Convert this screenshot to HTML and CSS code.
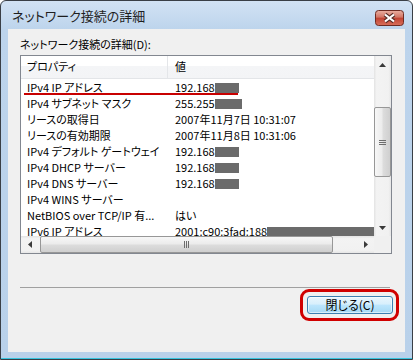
FILE: index.html
```html
<!DOCTYPE html>
<html lang="ja">
<head>
    <meta charset="UTF-8">
    <title>ネットワーク接続の詳細</title>
    <link rel="stylesheet" href="styles.css">
</head>
<body>
<div class="window">
    <div class="titlebar">
        <span class="title">ネットワーク接続の詳細</span>
        <span class="close-btn">
            <svg width="29" height="16" viewBox="0 0 29 16">
                <defs>
                    <linearGradient id="closeGrad" x1="0" y1="0" x2="0" y2="1">
                        <stop offset="0" stop-color="#eab0a2"/>
                        <stop offset="0.45" stop-color="#d27565"/>
                        <stop offset="0.5" stop-color="#c04232"/>
                        <stop offset="1" stop-color="#d9705b"/>
                    </linearGradient>
                </defs>
                <rect x="0.5" y="0.5" width="28" height="15" rx="3" fill="url(#closeGrad)" stroke="#6e2b22"/>
                <path d="M10 4.5 L19 11.5 M19 4.5 L10 11.5" stroke="#5a302a" stroke-width="4.2"/>
                <path d="M10 4.5 L19 11.5 M19 4.5 L10 11.5" stroke="#fff" stroke-width="2.2"/>
            </svg>
        </span>
    </div>

    <div class="client">
        <div class="caption">ネットワーク接続の詳細(D):</div>

        <div class="listbox">
            <div class="view">
                <div class="header">
                    <div class="col1">プロパティ</div>
                    <div class="col2">値</div>
                </div>
                <div class="row"><div class="col1">IPv4 IP アドレス</div><div class="col2">192.168<span class="mask mask-s"></span></div></div>
                <div class="row"><div class="col1">IPv4 サブネット マスク</div><div class="col2">255.255<span class="mask mask-m"></span></div></div>
                <div class="row"><div class="col1">リースの取得日</div><div class="col2">2007年11月7日 10:31:07</div></div>
                <div class="row"><div class="col1">リースの有効期限</div><div class="col2">2007年11月8日 10:31:06</div></div>
                <div class="row"><div class="col1">IPv4 デフォルト ゲートウェイ</div><div class="col2">192.168<span class="mask mask-s"></span></div></div>
                <div class="row"><div class="col1">IPv4 DHCP サーバー</div><div class="col2">192.168<span class="mask mask-s"></span></div></div>
                <div class="row"><div class="col1">IPv4 DNS サーバー</div><div class="col2">192.168<span class="mask mask-s"></span></div></div>
                <div class="row"><div class="col1">IPv4 WINS サーバー</div><div class="col2"></div></div>
                <div class="row"><div class="col1">NetBIOS over TCP/IP 有...</div><div class="col2">はい</div></div>
                <div class="row"><div class="col1">IPv6 IP アドレス</div><div class="col2">2001:c90:3fad:188<span class="mask mask-l"></span></div></div>
            </div>

            <div class="vscroll">
                <div class="sb-btn">
                    <svg width="7" height="4" viewBox="0 0 7 4"><polygon points="3.5,0 7,4 0,4" fill="#3a3a3a"/></svg>
                </div>
                <div class="vtrack">
                    <div class="vthumb">
                        <svg width="7" height="5" viewBox="0 0 7 5"><path d="M0 0.5 H7 M0 2.5 H7 M0 4.5 H7" stroke="#6d6d6d"/></svg>
                    </div>
                </div>
                <div class="sb-btn">
                    <svg width="7" height="4" viewBox="0 0 7 4"><polygon points="0,0 7,0 3.5,4" fill="#3a3a3a"/></svg>
                </div>
            </div>

            <div class="hscroll">
                <div class="sb-btn">
                    <svg width="4" height="7" viewBox="0 0 4 7"><polygon points="4,0 4,7 0,3.5" fill="#3a3a3a"/></svg>
                </div>
                <div class="htrack">
                    <div class="hthumb">
                        <svg width="5" height="7" viewBox="0 0 5 7"><path d="M0.5 0 V7 M2.5 0 V7 M4.5 0 V7" stroke="#6d6d6d"/></svg>
                    </div>
                </div>
                <div class="sb-btn">
                    <svg width="4" height="7" viewBox="0 0 4 7"><polygon points="0,0 4,3.5 0,7" fill="#3a3a3a"/></svg>
                </div>
            </div>

            <div class="corner"></div>

            <!-- red annotation under the first row -->
            <div class="mark-line"></div>
        </div>

        <div class="separator"></div>

        <div class="footer">
            <div class="mark-box">
                <button class="close-dialog">閉じる(C)</button>
            </div>
        </div>
    </div>
</div>
</body>
</html>
```

FILE: styles.css
```css
* {
    box-sizing: border-box;
}

body {
    margin: 0;
    font-family: "Noto Sans CJK JP", sans-serif;
    font-size: 11px;
    font-feature-settings: "palt";
    color: #000;
    background-color: #fff;
}

.window {
    width: 413px;
    height: 360px;
    display: flex;
    flex-direction: column;
    padding: 0 7px 7px;
    border: 1px solid #3a3f46;
    border-radius: 6px 6px 0 0;
    background: linear-gradient(#d2e2f4 0, #bdd4ec 28px, #b9d1ea 100%);
    box-shadow: inset 0 -1px 0 #36c4de;
    overflow: hidden;
}

.titlebar {
    height: 28px;
    display: flex;
    align-items: flex-start;
}

.title {
    padding: 7px 0 0 4px;
    font-size: 13px;
    line-height: 16px;
    color: #1e1e1e;
}

.close-btn {
    margin: 9px 1px 0 auto;
    height: 16px;
}

.close-btn svg {
    display: block;
}

.client {
    flex: 1;
    display: flex;
    flex-direction: column;
    padding: 7px 6px 0 12px;
    background-color: #f0f0f0;
}

.caption {
    line-height: 16px;
    margin-bottom: 3px;
}

.listbox {
    position: relative;
    height: 199px;
    margin-right: 7px;
    border: 1px solid #828790;
    background-color: #fff;
    display: grid;
    grid-template-columns: 1fr 17px;
    grid-template-rows: 1fr 17px;
}

.view {
    overflow: hidden;
}

.header {
    display: flex;
    height: 23px;
    line-height: 21px;
    background: linear-gradient(#fff 0, #fff 45%, #f4f5f7 46%, #f3f4f6 100%);
    border-bottom: 1px solid #e3e5e8;
}

.header .col1 {
    border-right: 1px solid #e4e6e9;
}

.row {
    display: flex;
    height: 16px;
    line-height: 16px;
}

.col1 {
    flex: none;
    width: 147px;
    padding-left: 6px;
    overflow: hidden;
    white-space: nowrap;
}

.col2 {
    padding-left: 7px;
    white-space: nowrap;
}

.mask {
    display: inline-block;
    height: 10px;
    vertical-align: -1px;
    background-color: #6b6b6b;
}

.mask-s {
    width: 24px;
}

.mask-m {
    width: 27px;
}

.mask-l {
    width: 110px;
}

.vscroll {
    display: flex;
    flex-direction: column;
    background: linear-gradient(to right, #e3e3e3 0, #f3f3f3 15%, #f1f1f1 85%, #e6e6e6 100%);
}

.hscroll {
    display: flex;
    background: linear-gradient(#e3e3e3 0, #f3f3f3 15%, #f1f1f1 85%, #e6e6e6 100%);
}

.sb-btn {
    flex: none;
    width: 17px;
    height: 17px;
    display: flex;
    align-items: center;
    justify-content: center;
}

.sb-btn svg {
    display: block;
}

.vtrack {
    flex: 1;
}

.vthumb {
    margin: 34px 0 0 0;
    height: 70px;
    border: 1px solid #979797;
    border-radius: 2px;
    background: linear-gradient(to right, #f7f7f7 0, #ececec 45%, #dcdcdc 55%, #cfcfcf 100%);
    display: flex;
    align-items: center;
    justify-content: center;
}

.htrack {
    flex: 1;
}

.hthumb {
    margin: 0 0 0 2px;
    width: 293px;
    height: 17px;
    border: 1px solid #979797;
    border-radius: 2px;
    background: linear-gradient(#f7f7f7 0, #ececec 45%, #dcdcdc 55%, #cfcfcf 100%);
    display: flex;
    align-items: center;
    justify-content: center;
}

.corner {
    background-color: #f0f0f0;
}

.mark-line {
    position: absolute;
    left: 3px;
    top: 37px;
    width: 214px;
    height: 2px;
    background-color: #c80000;
}

.separator {
    height: 1px;
    margin: 33px 9px 0 0;
    background-color: #a0a0a0;
}

.footer {
    display: flex;
    justify-content: flex-end;
    margin-top: 1px;
}

.mark-box {
    padding: 4px 3px 4px 4px;
    border: 3px solid #d00000;
    border-radius: 9px;
}

.close-dialog {
    display: block;
    width: 86px;
    height: 18px;
    padding: 0;
    font-family: inherit;
    font-size: 12px;
    font-feature-settings: "palt";
    line-height: 16px;
    color: #000;
    border: 1px solid #3c7fb1;
    border-radius: 3px;
    background: linear-gradient(#e9f6fd 0, #d7effc 45%, #bde6fd 50%, #a6d9f4 100%);
    box-shadow: inset 0 0 0 1px rgba(255, 255, 255, 0.55);
}
```
